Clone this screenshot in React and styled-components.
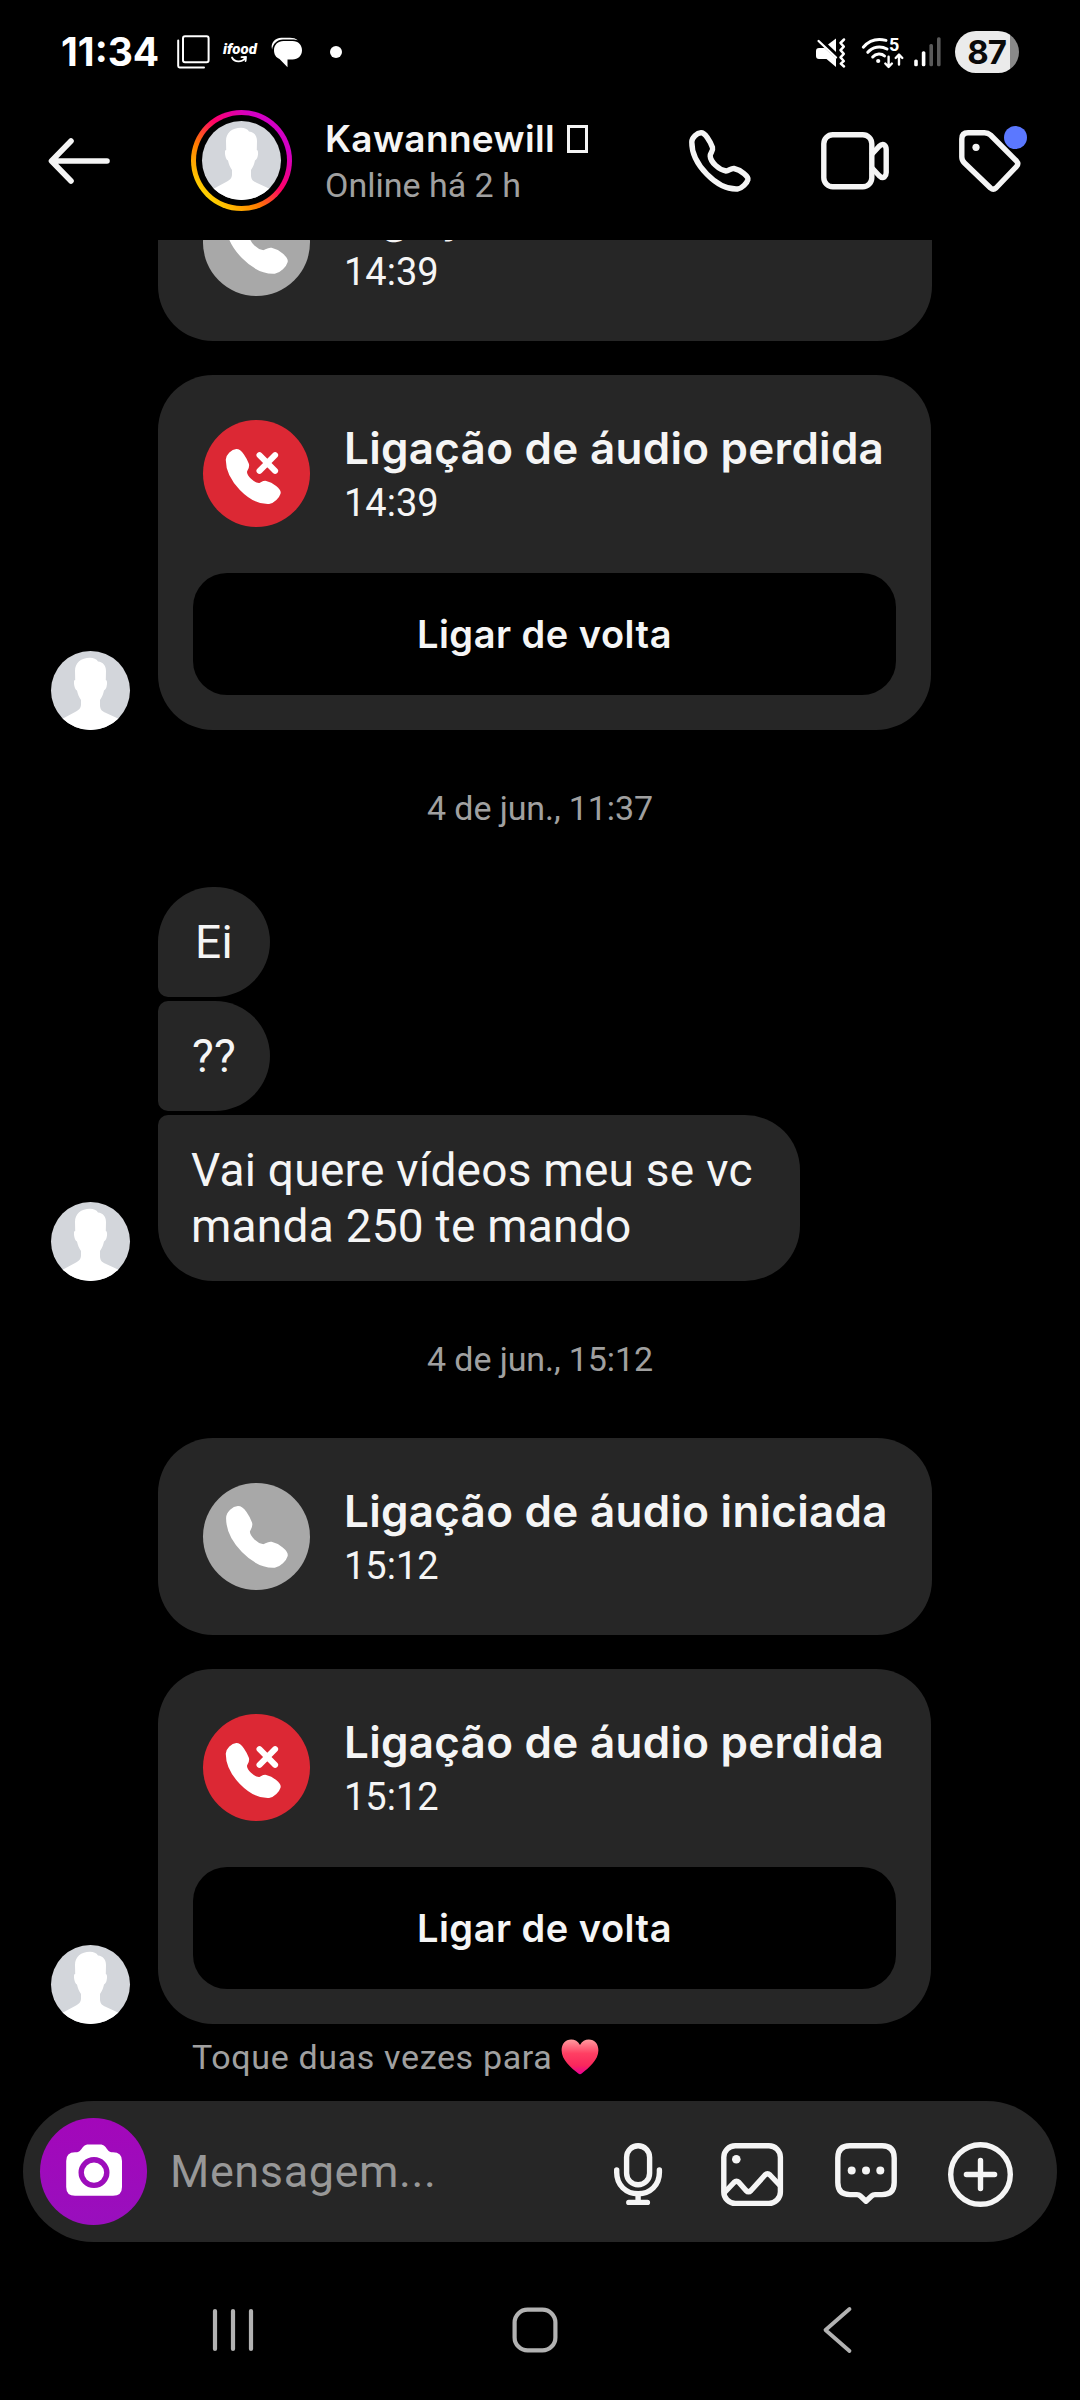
import React from "react";
import styled, { createGlobalStyle, css } from "styled-components";

const PHONE_PATH =
  "M12 2.8C8 3 3 7.5 2.8 12C2.5 34 28 60 48.5 59C53 58.5 58 53 59 49.5C60 47 52 40 45 38.5C42 38 40 41 37 41C30 40 21.5 32 21.2 26C21 23 24.5 21 23.5 17.5C21 11 16 2.6 12 2.8Z";

const PhoneIcon = ({ size = 62, filled }) => (
  <Svg
    width={size}
    height={size}
    viewBox="0 0 62 62"
    fill={filled ? "#fff" : "none"}
    stroke={filled ? "#fff" : "#f5f5f5"}
    strokeWidth={5.4}
  >
    <path d={PHONE_PATH} />
  </Svg>
);

const MissedIcon = () => (
  <Svg width={107} height={107} viewBox="0 0 107 107" fill="none" stroke="#fff">
    <g transform="translate(22.7 29) scale(0.89)">
      <path d={PHONE_PATH} fill="#fff" strokeWidth={5.4} />
    </g>
    <path d="M56.5 35.2l15.6 15.6M72.1 35.2L56.5 50.8" strokeWidth={6} />
  </Svg>
);

const BackArrow = () => (
  <Svg width={62} height={46} viewBox="0 0 62 46" fill="none" stroke="#f5f5f5" strokeWidth={5.6}>
    <path d="M23 3L3.5 23L23 43M4 23h55" />
  </Svg>
);

const VideoIcon = () => (
  <Svg width={68} height={58} viewBox="0 0 68 58" fill="none" stroke="#f5f5f5" strokeWidth={5.4}>
    <rect x="2.8" y="2.8" width="48" height="52" rx="9" />
    <path d="M51.5 21.5L58 14.5Q61 11.5 63.4 13Q65.2 14.5 65.2 17.5V40.5Q65.2 43.5 63.4 45Q61 46.5 58 43.5L51.5 36.5" />
  </Svg>
);

const TagIcon = () => (
  <Svg width={62} height={62} viewBox="0 0 62 62" fill="none" stroke="#f5f5f5" strokeWidth={5.4}>
    <path d="M2.8 9Q2.8 2.8 9 2.8H25.5Q29 2.8 31.5 5L57.5 31Q60 33.8 57.5 36.5L37 58Q34.3 60.3 31.5 58L5.5 33Q2.8 30.5 2.8 27Z" />
    <circle cx="17" cy="17.3" r="3.6" fill="#f5f5f5" stroke="none" />
  </Svg>
);

const Silhouette = ({ size = 79 }) => (
  <Svg width={size} height={size} viewBox="0 0 79 79">
    <path
      fill="#fff"
      d="M39 6.8C42.5 6.8 45.5 8 47 10.5C52 11 55 14.5 55 20L54.8 29C56.5 29.5 56.3 33 55.5 36C55 38 53.8 39 53 39.5C52.3 43 51 46 49 49V54C49 58.5 51 60 54 61.5L67 67.5V79H12V67.5L25 60.5C28.5 58.5 30 57 30 53V49C28 46 26.7 43 26 39.5C24 38.5 22.8 34 23 31C23 29.5 23.5 29 24.2 29L24 20C24 12 30 6.8 39 6.8Z"
    />
  </Svg>
);

const CameraIcon = () => (
  <Svg width={56} height={52} viewBox="0 0 56 52" fill="#fff">
    <path d="M9 8.2H11C14 8.2 15.5 4.5 17.5 2.5C19 .9 20.5.4 22.5.4H34C36 .4 37.5.9 39 2.5C41 4.5 42.5 8.2 45.5 8.2H47Q56 8.2 56 17V43Q56 51.8 47 51.8H9Q.2 51.8.2 43V17Q.2 8.2 9 8.2Z" />
    <circle cx="28" cy="28.6" r="12.8" fill="none" stroke="#9d0dbb" strokeWidth="5.4" />
  </Svg>
);

const MicIcon = () => (
  <Svg width={48} height={63} viewBox="0 0 48 63" fill="none" stroke="#f5f5f5" strokeWidth={5.4}>
    <rect x="12.6" y="2.8" width="23" height="39" rx="11.5" />
    <path d="M2.7 27V29.5C2.7 42 12 50.8 24.1 50.8S45.4 42 45.4 29.5V27M24.1 51v8M14.8 59.4h18.6" />
  </Svg>
);

const GalleryIcon = () => (
  <Svg width={62} height={63} viewBox="0 0 62 63" fill="none" stroke="#f5f5f5" strokeWidth={5.4}>
    <rect x="2.8" y="2.8" width="56.6" height="57.6" rx="11.5" />
    <path d="M4 49L13 39.5Q15.5 37 18 39.5L25 47.5Q27.5 50 30 47.5L44 32Q46.5 29.5 49 32L58.5 42" />
    <circle cx="15.3" cy="16.3" r="4.3" fill="#f5f5f5" stroke="none" />
  </Svg>
);

const StickerIcon = () => (
  <Svg width={62} height={63} viewBox="0 0 62 63" fill="none" stroke="#f5f5f5" strokeWidth={5.4}>
    <path d="M15 2.8H47Q59.2 2.8 59.2 15V39.5Q59.2 51.6 47 51.6H40Q38 51.6 36.6 53L31 58.2L25.4 53Q24 51.6 22 51.6H15Q2.8 51.6 2.8 39.5V15Q2.8 2.8 15 2.8Z" />
    <g fill="#f5f5f5" stroke="none">
      <circle cx="16.7" cy="27.6" r="4" />
      <circle cx="31" cy="27.6" r="4" />
      <circle cx="45.3" cy="27.6" r="4" />
    </g>
  </Svg>
);

const PlusIcon = () => (
  <Svg width={65} height={65} viewBox="0 0 65 65" fill="none" stroke="#f5f5f5" strokeWidth={5.4}>
    <circle cx="32.5" cy="32.5" r="29.8" />
    <path d="M32.5 18.4v28.2M18.4 32.5h28.2" />
  </Svg>
);

const HeartIcon = () => (
  <Svg width={38} height={36} viewBox="0 0 38 36">
    <defs>
      <linearGradient id="heart" x1="0" y1="0" x2="0" y2="1">
        <stop offset="0" stopColor="#ff9a9e" />
        <stop offset="0.4" stopColor="#ff3f63" />
        <stop offset="0.75" stopColor="#f9275c" />
        <stop offset="1" stopColor="#ea0098" />
      </linearGradient>
    </defs>
    <path
      fill="url(#heart)"
      d="M19 6C17 2.3 13.8.6 10.2.6C4.3.6.6 5.2.6 11.2C.6 21 10 28.6 17 34.3Q19 36 21 34.3C28 28.6 37.4 21 37.4 11.2C37.4 5.2 33.7.6 27.8.6C24.2.6 21 2.3 19 6Z"
    />
  </Svg>
);

const CopyIcon = () => (
  <Svg width={33} height={34} viewBox="0 0 33 34" fill="none" stroke="#fff" strokeWidth={2}>
    <rect x="6" y="1.2" width="25.6" height="26" rx="2" />
    <path d="M1.2 5.5V31Q1.2 32.4 2.6 32.4H27" />
  </Svg>
);

const SmileIcon = () => (
  <Svg width={18} height={7} viewBox="0 0 18 7" fill="none" stroke="#fff" strokeWidth={1.8}>
    <path d="M1 1.5C3.5 6.5 11 7 14.5 1.5M10.5 1.2L15 .8L14.6 5" />
  </Svg>
);

const ChatsIcon = () => (
  <Svg width={32} height={31} viewBox="0 0 32 31" fill="#fff">
    <path d="M1.1 12.5C-.8 6 4 .8 10.5 .8H19C22 .8 25 1.6 26.8 3.3L23 2.6H12C6 2.8 2 6.8 1.1 12.5Z" />
    <path d="M12.5 4.1H21.5C27.5 4.1 31 8.3 31 13.3C31 18.8 27 22.5 21.5 22.5H16.5V30.3L8.5 22C4.8 20.7 3 17.3 3 13.3C3 8 7 4.1 12.5 4.1Z" />
  </Svg>
);

const MuteIcon = () => (
  <Svg width={32} height={31} viewBox="0 0 32 31" fill="#fff">
    <path d="M13 7.5L21 1.6V15Z" />
    <path d="M4 11H9.5L21 21.5V30L11.5 22H4Q1 22 1 19V14Q1 11 4 11Z" />
    <path d="M3.6 4L21 20.5" stroke="#fff" strokeWidth="2.4" />
    <path
      d="M29 2.5L25.5 6L28.8 9.6L25.5 13.2L28.8 16.8L25.5 20.4L28.8 24L25.8 26.6L29 29.5"
      fill="none"
      stroke="#fff"
      strokeWidth="2.5"
    />
  </Svg>
);

const WifiIcon = () => (
  <Svg width={45} height={33} viewBox="0 0 45 33" fill="none" stroke="#fff" strokeWidth={3}>
    <path d="M2.3 11.2C8.5 4 17 2.4 25 4.4M6.8 16.3C11.5 10.6 19.5 9.4 26 13M11.7 21C15 17.2 20.5 17.2 23.5 20" />
    <circle cx="17.2" cy="25" r="2.1" fill="#fff" stroke="none" />
    <path d="M27.6 20.8V30.5M24.3 27.5L27.6 31L30.9 27.5M38 28.5V18.8M34.7 22L38 18.5L41.3 22" strokeWidth="2.4" />
  </Svg>
);

const SignalIcon = () => (
  <Svg width={27} height={30} viewBox="0 0 27 30" fill="#fff">
    <rect x="0.2" y="22.5" width="3.6" height="6.8" rx="1.5" />
    <rect x="7.8" y="14.3" width="3.6" height="15" rx="1.5" />
    <rect x="15.4" y="7" width="3.6" height="22.3" rx="1.5" fill="#5a5a5a" />
    <rect x="23" y="0.2" width="3.6" height="29.1" rx="1.5" fill="#5a5a5a" />
  </Svg>
);

const RecentsIcon = () => (
  <Svg width={42} height={44} viewBox="0 0 42 44" stroke="#b2b2b2" strokeWidth={4.2}>
    <path d="M3 3v38M21 3v38M39 3v38" />
  </Svg>
);

const HomeIcon = () => (
  <Svg width={46} height={46} viewBox="0 0 46 46" fill="none" stroke="#b2b2b2" strokeWidth={4.2}>
    <rect x="2.6" y="2.6" width="40.8" height="40.8" rx="13" />
  </Svg>
);

const NavBackIcon = () => (
  <Svg width={30} height={48} viewBox="0 0 30 48" fill="none" stroke="#b2b2b2" strokeWidth={3.8}>
    <path d="M27.5 3L3.5 24L27.5 45" />
  </Svg>
);

const CallCard = ({ title, time, missed }) => (
  <Card $missed={missed}>
    <CallInfo>
      <CallBadge $missed={missed}>
        {missed ? <MissedIcon /> : <PhoneIcon filled />}
      </CallBadge>
      <div>
        <CallTitle>{title}</CallTitle>
        <CallTime>{time}</CallTime>
      </div>
    </CallInfo>
    {missed && <CallBack>Ligar de volta</CallBack>}
  </Card>
);

const Message = ({ avatar, children }) => (
  <Row>
    <AvatarSlot>
      {avatar && (
        <Avatar>
          <Silhouette />
        </Avatar>
      )}
    </AvatarSlot>
    {children}
  </Row>
);

const App = () => {
  return (
    <Screen>
      <GlobalStyle />
      <StatusBar>
        <Clock>11:34</Clock>
        <CopyIcon />
        <FoodBadge>
          ifood
          <SmileIcon />
        </FoodBadge>
        <ChatsIcon />
        <MoreDot />
        <StatusRight>
          <MuteIcon />
          <Wifi>
            <WifiIcon />
            <WifiBand>5</WifiBand>
          </Wifi>
          <SignalIcon />
          <Battery>87</Battery>
        </StatusRight>
      </StatusBar>

      <Header>
        <BackArrow />
        <StoryRing>
          <Avatar>
            <Silhouette />
          </Avatar>
        </StoryRing>
        <Contact>
          <Name>
            Kawannewill
            <MissingGlyph />
          </Name>
          <LastSeen>Online há 2 h</LastSeen>
        </Contact>
        <HeaderAction>
          <PhoneIcon />
        </HeaderAction>
        <HeaderAction>
          <VideoIcon />
        </HeaderAction>
        <HeaderAction>
          <TagIcon />
          <Unread />
        </HeaderAction>
      </Header>

      <Thread>
        <Message>
          <CallCard title="Ligação de áudio iniciada" time="14:39" />
        </Message>
        <Gap />
        <Message avatar>
          <CallCard title="Ligação de áudio perdida" time="14:39" missed />
        </Message>
        <DateLabel>4 de jun., 11:37</DateLabel>
        <Bubbles>
          <Message>
            <Bubble $first>Ei</Bubble>
          </Message>
          <Message>
            <Bubble>??</Bubble>
          </Message>
          <Message avatar>
            <Bubble $last>
              Vai quere vídeos meu se vc
              <br />
              manda 250 te mando
            </Bubble>
          </Message>
        </Bubbles>
        <DateLabel>4 de jun., 15:12</DateLabel>
        <Message>
          <CallCard title="Ligação de áudio iniciada" time="15:12" />
        </Message>
        <Gap />
        <Message avatar>
          <CallCard title="Ligação de áudio perdida" time="15:12" missed />
        </Message>
        <Hint>
          Toque duas vezes para
          <HeartIcon />
        </Hint>
      </Thread>

      <Composer>
        <CameraButton>
          <CameraIcon />
        </CameraButton>
        <Placeholder>Mensagem...</Placeholder>
        <ComposerAction>
          <MicIcon />
        </ComposerAction>
        <ComposerAction>
          <GalleryIcon />
        </ComposerAction>
        <ComposerAction>
          <StickerIcon />
        </ComposerAction>
        <ComposerAction>
          <PlusIcon />
        </ComposerAction>
      </Composer>

      <NavBar>
        <RecentsIcon />
        <HomeIcon />
        <NavBackIcon />
      </NavBar>
    </Screen>
  );
};

const GlobalStyle = createGlobalStyle`
  * {
    box-sizing: border-box;
  }
  body {
    margin: 0;
    background: #000;
  }
`;

const boldFont = css`
  font-family: Inter, Roboto, sans-serif;
`;

const Svg = styled.svg`
  display: block;
  flex: none;
  overflow: visible;
  stroke-linecap: round;
  stroke-linejoin: round;
`;

const Screen = styled.div`
  display: flex;
  flex-direction: column;
  width: 1080px;
  height: 2400px;
  overflow: hidden;
  background: #000;
  color: #f5f5f5;
  font-family: Roboto, "Noto Sans", sans-serif;
  white-space: nowrap;
`;

const StatusBar = styled.div`
  display: flex;
  flex: none;
  align-items: center;
  height: 104px;
  padding: 0 61px 0 61px;
  color: #fff;
`;
const Clock = styled.div`
  ${boldFont}
  width: 116px;
  font-size: 39px;
  font-weight: 700;
  line-height: 48px;
`;
const FoodBadge = styled.div`
  width: 36px;
  margin: 0 12px 0 13px;
  font-size: 15px;
  font-style: italic;
  font-weight: 900;
  line-height: 14px;
  svg {
    margin-left: 8px;
  }
`;
const MoreDot = styled.div`
  width: 12px;
  height: 12px;
  margin-left: 27px;
  border-radius: 50%;
  background: #fff;
`;
const StatusRight = styled.div`
  display: flex;
  align-items: center;
  margin-left: auto;
`;
const Wifi = styled.div`
  position: relative;
  margin: 0 8px 0 14px;
`;
const WifiBand = styled.span`
  position: absolute;
  top: 0;
  left: 28px;
  font-size: 18px;
  font-weight: 700;
  line-height: 17px;
`;
const Battery = styled.div`
  ${boldFont}
  width: 64px;
  height: 42px;
  margin-left: 14px;
  padding-right: 1px;
  border-radius: 21px;
  background: linear-gradient(90deg, #ebebeb 55px, #8a8a8a 55px);
  color: #0a0a0a;
  font-size: 33px;
  font-weight: 700;
  line-height: 42px;
  text-align: center;
  letter-spacing: -1px;
`;

const Header = styled.div`
  display: flex;
  flex: none;
  align-items: center;
  height: 136px;
  padding: 0 23px 22px 48px;
`;
const Avatar = styled.div`
  flex: none;
  width: 79px;
  height: 79px;
  overflow: hidden;
  border-radius: 50%;
  background: #d3d6db;
`;
const StoryRing = styled.div`
  flex: none;
  width: 101px;
  height: 101px;
  margin: -1px 0 0 81px;
  padding: 6px;
  border: 5px solid transparent;
  border-radius: 50%;
  background:
    linear-gradient(#000, #000) padding-box,
    linear-gradient(45deg, #ffd600 14%, #ff7a00 36%, #ff0069 56%, #d300c5 78%) border-box;
`;
const Contact = styled.div`
  flex: 1;
  margin-left: 33px;
`;
const Name = styled.div`
  ${boldFont}
  display: flex;
  align-items: center;
  font-size: 37px;
  font-weight: 600;
  letter-spacing: 0.35px;
  line-height: 48px;
`;
const MissingGlyph = styled.span`
  width: 21px;
  height: 28px;
  margin-left: 12px;
  border: 3px solid #f5f5f5;
`;
const LastSeen = styled.div`
  color: #a0a0a0;
  font-size: 34px;
  line-height: 45px;
`;
const HeaderAction = styled.div`
  position: relative;
  display: flex;
  justify-content: center;
  width: 135px;
`;
const Unread = styled.span`
  position: absolute;
  top: -4px;
  right: 30px;
  width: 23px;
  height: 23px;
  border-radius: 50%;
  background: #5b78ff;
`;

const Thread = styled.div`
  display: flex;
  flex: 1;
  flex-direction: column;
  justify-content: flex-end;
  min-height: 0;
  padding-bottom: 19px;
  overflow: hidden;
  > * {
    flex: none;
  }
`;
const Row = styled.div`
  display: flex;
  align-items: flex-end;
`;
const AvatarSlot = styled.div`
  width: 158px;
  padding-left: 51px;
`;
const Gap = styled.div`
  height: 34px;
`;
const DateLabel = styled.div`
  color: #a0a0a0;
  font-size: 34px;
  letter-spacing: -0.1px;
  line-height: 157px;
  text-align: center;
`;

const Card = styled.div`
  width: ${(props) => (props.$missed ? 773 : 774)}px;
  border-radius: 55px;
  background: #262626;
`;
const CallInfo = styled.div`
  display: flex;
  height: 197px;
  padding: 45px 0 0 45px;
`;
const CallBadge = styled.div`
  display: flex;
  align-items: center;
  justify-content: center;
  width: 107px;
  height: 107px;
  margin-right: 34px;
  border-radius: 50%;
  background: ${(props) => (props.$missed ? "#dc2834" : "#a8a8a8")};
`;
const CallTitle = styled.div`
  ${boldFont}
  margin-top: 1px;
  font-size: 44px;
  font-weight: 600;
  letter-spacing: 0.27px;
  line-height: 54px;
`;
const CallTime = styled.div`
  padding-top: 1px;
  font-size: 38px;
  line-height: 54px;
`;
const CallBack = styled.button`
  ${boldFont}
  display: block;
  width: 703px;
  height: 122px;
  margin: 1px 35px 35px;
  padding: 0 0 1px;
  border: 0;
  border-radius: 34px;
  background: #000;
  color: #f5f5f5;
  font-size: 38px;
  font-weight: 600;
  letter-spacing: 0.5px;
`;

const Bubbles = styled.div`
  display: flex;
  flex-direction: column;
  gap: 4px;
`;
const Bubble = styled.div`
  min-width: 112px;
  padding: 27px 34px;
  border-radius: 10px 55px 55px 10px;
  background: #262626;
  font-size: 46px;
  letter-spacing: 0.25px;
  line-height: 56px;
  text-align: center;
  ${(props) =>
    props.$first &&
    css`
      border-top-left-radius: 55px;
    `}
  ${(props) =>
    props.$last &&
    css`
      width: 642px;
      padding-left: 33px;
      border-bottom-left-radius: 55px;
      text-align: left;
    `}
`;
const Hint = styled.div`
  display: flex;
  align-items: center;
  gap: 9px;
  height: 51px;
  margin: 7px 0 0 192px;
  color: #a0a0a0;
  font-size: 34px;
  letter-spacing: 0.65px;
`;

const Composer = styled.div`
  display: flex;
  flex: none;
  align-items: center;
  height: 141px;
  margin: 0 23px;
  padding: 0 20px 0 17px;
  border-radius: 71px;
  background: #262626;
`;
const CameraButton = styled.div`
  display: flex;
  align-items: center;
  justify-content: center;
  width: 107px;
  height: 107px;
  padding-bottom: 4px;
  border-radius: 50%;
  background: linear-gradient(#a307ba, #990fbd);
`;
const Placeholder = styled.div`
  flex: 1;
  margin-left: 23px;
  color: #989898;
  font-size: 45px;
  letter-spacing: 0.6px;
`;
const ComposerAction = styled.div`
  display: flex;
  justify-content: center;
  width: 114px;
  padding-top: 5px;
`;

const NavBar = styled.div`
  display: grid;
  flex: none;
  grid-template-columns: repeat(3, 302px);
  align-items: center;
  justify-items: center;
  height: 158px;
  padding: 18px 0 0 82px;
`;

export default App;
